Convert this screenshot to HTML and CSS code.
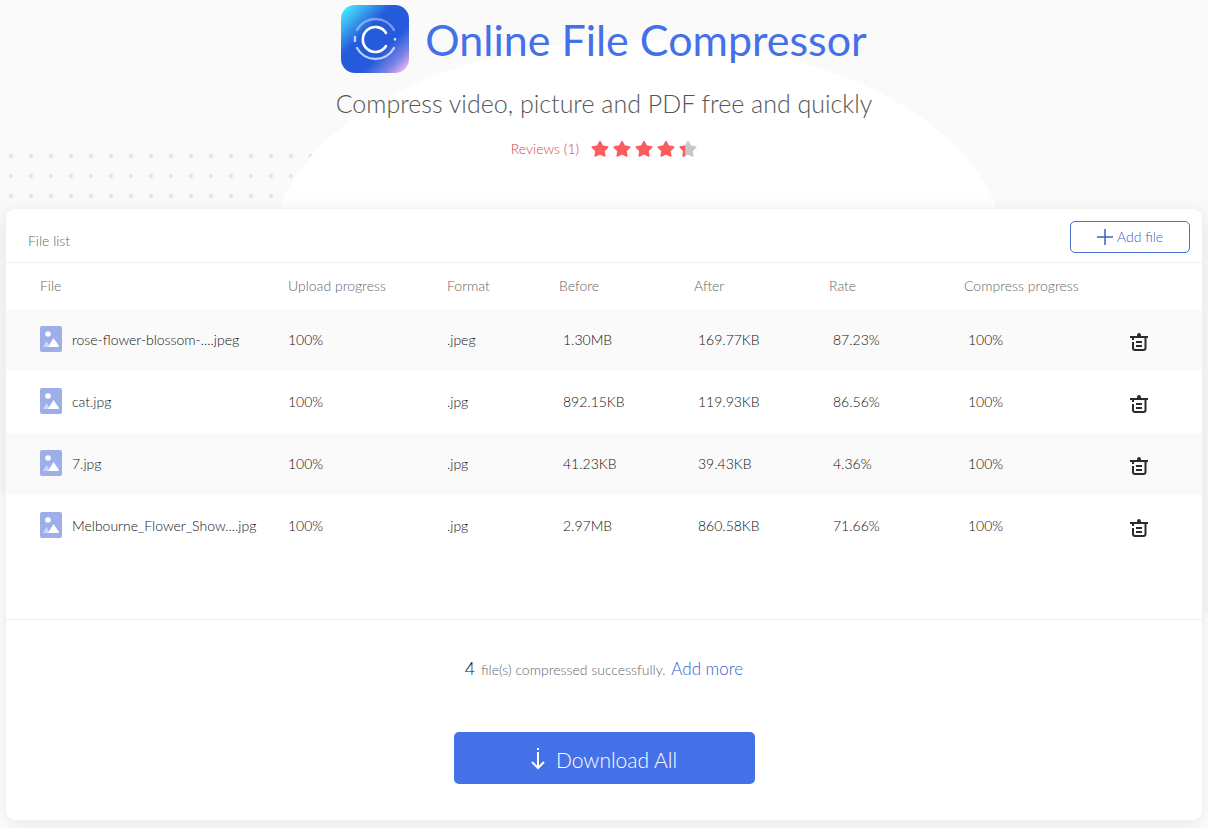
FILE: index.html
```html
<!DOCTYPE html>
<html lang="en">
	<head>
		<meta charset="UTF-8">
		<title>Online File Compressor</title>
		<link rel="stylesheet" href="styles.css">
	</head>

	<body>

		<svg class="sprite" aria-hidden="true">
			<symbol id="icon-image" viewBox="0 0 22 26">
				<rect width="22" height="26" rx="2" fill="#9dafea"/>
				<circle cx="8" cy="8" r="2.800" fill="#fff"/>
				<path d="M3 21 L6.500 15 L10 21 Z" fill="#ced7f5"/>
				<path d="M8 21 L13.500 12 L19 20 Q19 21 18 21 Z" fill="#fff"/>
			</symbol>
			<symbol id="icon-trash" viewBox="0 0 18 18">
				<path d="M0 4H18M15.500 4V15Q15.500 17 13.500 17H5Q3 17 3 15V9" fill="none" stroke="#2b2b2b" stroke-width="2"/>
				<path d="M7 3Q7 0 9 0Q11 0 11 3Z" fill="#2b2b2b"/>
				<path d="M6 9H12M6 13H12M2 6H4" fill="none" stroke="#2b2b2b" stroke-width="2"/>
			</symbol>
			<symbol id="icon-star" viewBox="0 0 16 16">
				<path d="M8 1.500 L10.100 5.500 L14.800 6.300 L11.500 9.600 L12.200 14.200 L8 12.200 L3.800 14.200 L4.500 9.600 L1.200 6.300 L5.900 5.500 Z" stroke="currentColor" stroke-width="1.500" stroke-linejoin="round" fill="currentColor"/>
			</symbol>
		</svg>

		<header class="hero">
			<div class="hero-circle"></div>
			<div class="hero-dots"></div>
			<div class="brand">
				<svg class="logo" viewBox="0 0 68 68" aria-hidden="true">
					<defs>
						<linearGradient id="logo-base" x1="0" y1="0" x2="1" y2="1">
							<stop offset="0" stop-color="#4ff"/>
							<stop offset=".12" stop-color="#41c9f8"/>
							<stop offset=".38" stop-color="#245cdc"/>
							<stop offset=".65" stop-color="#245adb"/>
							<stop offset=".83" stop-color="#7f86e6"/>
							<stop offset=".95" stop-color="#eab6f3"/>
						</linearGradient>
					</defs>
					<rect width="68" height="68" rx="14" fill="url(#logo-base)"/>
					<g fill="none" stroke="#fff" stroke-linecap="round" stroke-width="2.400">
						<path d="M16 25A21 21 0 0 1 53 25" opacity=".4"/>
						<path d="M16 43A21 21 0 0 0 53 43" opacity=".7"/>
						<path d="M14 32V36" opacity=".7"/>
						<path d="M54 34V34.500" opacity=".8"/>
						<path d="M45 28A12.500 12.500 0 1 0 45 41" stroke-width="2.600"/>
					</g>
				</svg>
				<h1>Online File Compressor</h1>
			</div>
			<p class="subtitle">Compress video, picture and PDF free and quickly</p>
			<div class="rating">
				<a class="reviews" href="#">Reviews (1)</a>
				<div class="stars" role="img" aria-label="4.3 out of 5">
					<svg class="star"><use href="#icon-star"/></svg>
					<svg class="star"><use href="#icon-star"/></svg>
					<svg class="star"><use href="#icon-star"/></svg>
					<svg class="star"><use href="#icon-star"/></svg>
					<span class="star-partial">
						<svg class="star"><use href="#icon-star"/></svg>
						<svg class="star star-fill"><use href="#icon-star"/></svg>
					</span>
				</div>
			</div>
		</header>

		<main class="card">
			<div class="card-head">
				<h2>File list</h2>
				<button class="add-file" type="button">
					<svg class="plus" viewBox="0 0 16 16" aria-hidden="true"><path d="M0 8H16M8 0V16" stroke="currentColor" stroke-width="1.500"/></svg>
					Add file
				</button>
			</div>

			<div class="list">
				<table class="files">
					<colgroup>
						<col class="col-file">
						<col class="col-upload">
						<col class="col-format">
						<col class="col-size">
						<col class="col-size">
						<col class="col-size">
						<col class="col-compress">
						<col>
					</colgroup>
					<thead>
						<tr>
							<th>File</th>
							<th>Upload progress</th>
							<th>Format</th>
							<th>Before</th>
							<th>After</th>
							<th>Rate</th>
							<th>Compress progress</th>
							<th></th>
						</tr>
					</thead>
					<tbody>
						<tr>
							<td><span class="name"><svg class="thumb"><use href="#icon-image"/></svg>rose-flower-blossom-....jpeg</span></td>
							<td>100%</td>
							<td>.jpeg</td>
							<td class="num">1.30MB</td>
							<td class="num">169.77KB</td>
							<td class="num">87.23%</td>
							<td class="num">100%</td>
							<td><button class="remove" type="button" aria-label="Delete"><svg class="trash"><use href="#icon-trash"/></svg></button></td>
						</tr>
						<tr>
							<td><span class="name"><svg class="thumb"><use href="#icon-image"/></svg>cat.jpg</span></td>
							<td>100%</td>
							<td>.jpg</td>
							<td class="num">892.15KB</td>
							<td class="num">119.93KB</td>
							<td class="num">86.56%</td>
							<td class="num">100%</td>
							<td><button class="remove" type="button" aria-label="Delete"><svg class="trash"><use href="#icon-trash"/></svg></button></td>
						</tr>
						<tr>
							<td><span class="name"><svg class="thumb"><use href="#icon-image"/></svg>7.jpg</span></td>
							<td>100%</td>
							<td>.jpg</td>
							<td class="num">41.23KB</td>
							<td class="num">39.43KB</td>
							<td class="num">4.36%</td>
							<td class="num">100%</td>
							<td><button class="remove" type="button" aria-label="Delete"><svg class="trash"><use href="#icon-trash"/></svg></button></td>
						</tr>
						<tr>
							<td><span class="name"><svg class="thumb"><use href="#icon-image"/></svg>Melbourne_Flower_Show....jpg</span></td>
							<td>100%</td>
							<td>.jpg</td>
							<td class="num">2.97MB</td>
							<td class="num">860.58KB</td>
							<td class="num">71.66%</td>
							<td class="num">100%</td>
							<td><button class="remove" type="button" aria-label="Delete"><svg class="trash"><use href="#icon-trash"/></svg></button></td>
						</tr>
					</tbody>
				</table>
			</div>

			<div class="card-foot">
				<p class="summary"><b>4</b> <span>file(s) compressed successfully.</span> <a href="#">Add more</a></p>
				<button class="download" type="button">
					<svg class="arrow" viewBox="0 0 14 22" aria-hidden="true">
						<path d="M7 4V20M1 14L7 20L13 14" fill="none" stroke="#fff" stroke-width="2"/>
						<path d="M7 0V2" stroke="#fff" stroke-width="2"/>
					</svg>
					Download All
				</button>
			</div>
		</main>

	</body>

</html>
```
FILE: styles.css
```css
* { box-sizing: border-box; margin: 0; padding: 0 }

body {
	min-height: 100vh;
	padding: 0 5px 7px;
	overflow: hidden;
	position: relative;
	font-family: Lato, "Open Sans", sans-serif;
	font-size: 14px;
	font-weight: 300;
	color: #111;
	background: #fff;
}

/* tinted backdrop, ends on a slant behind the card */
body::before {
	content: "";
	position: absolute;
	inset: 0;
	z-index: -2;
	background: #fafafa;
	clip-path: polygon(0 0, 100% 0, 100% 614px, 0 493px);
}

button { font: inherit; cursor: pointer }
a { color: #3560d8; text-decoration: none }

.sprite {
	position: absolute;
	width: 0;
	height: 0;
}

/* header */
.hero {
	height: 208px;
	padding-top: 5px;
	display: flex;
	flex-direction: column;
	align-items: center;
}

.hero-circle {
	position: absolute;
	top: 40px;
	left: 50%;
	z-index: -1;
	width: 734px;
	height: 426px;
	margin-left: -333px;
	border-radius: 50%;
	background: #fff;
}

.hero-dots {
	position: absolute;
	top: 146px;
	left: 1px;
	z-index: -2;
	width: 320px;
	height: 60px;
	background: radial-gradient(circle, #e2e2e2 1px, transparent 3px) 0 0 / 20px 20px;
}

.brand {
	display: flex;
	align-items: center;
	gap: 16px;
}

.logo {
	width: 68px;
	height: 68px;
}

h1 {
	padding-top: 2px;
	font-size: 43px;
	line-height: 66px;
	font-weight: 400;
	color: #4571e8;
}

.subtitle {
	margin-top: 15px;
	font-size: 25px;
	line-height: 30px;
	color: #555;
}

.rating {
	margin-top: 21px;
	display: flex;
	align-items: center;
	gap: 12px;
	line-height: 20px;
}

.reviews { color: #d94448 }

.stars {
	display: flex;
	gap: 4px;
	color: #fb5d5f;
}

.star {
	display: block;
	width: 18px;
	height: 18px;
}

.star-partial {
	position: relative;
	color: #c8c8c8;
}

.star-fill {
	position: absolute;
	top: 0;
	left: 0;
	color: #fb5d5f;
	clip-path: inset(0 12px 0 0);
}

/* card */
.card {
	border: 1px solid #f2f2f2;
	border-radius: 10px;
	background: #fff;
	box-shadow: 0 5px 20px rgba(0, 0, 0, .1);
}

.card-head {
	height: 54px;
	padding: 0 12px 0 22px;
	display: flex;
	align-items: center;
	justify-content: space-between;
	border-bottom: 1px solid #eee;
}

h2 {
	padding-top: 10px;
	font-size: 14px;
	font-weight: 300;
	color: #666;
}

.add-file {
	width: 120px;
	height: 32px;
	margin-top: 2px;
	display: flex;
	align-items: center;
	justify-content: center;
	gap: 4px;
	border: 1px solid #4a70cc;
	border-radius: 5px;
	background: #fff;
	color: #3a62c4;
}

.plus {
	width: 16px;
	height: 16px;
}

.list {
	min-height: 357px;
	border-bottom: 1px solid #eee;
}

.files {
	width: 100%;
	border-collapse: collapse;
	table-layout: fixed;
}

.col-file { width: 270px }
.col-upload { width: 159px }
.col-format { width: 112px }
.col-size { width: 135px }
.col-compress { width: 160px }

th {
	height: 46px;
	padding: 0 0 2px 12px;
	text-align: left;
	font-weight: 300;
	color: #666;
}

td {
	height: 62px;
	padding: 0 0 2px 12px;
}

th:first-child, td:first-child { padding-left: 34px }

td.num { padding-left: 16px }

tbody tr:nth-child(odd) { background: #fafafa }

.name {
	display: flex;
	align-items: center;
	gap: 10px;
	white-space: nowrap;
}

.thumb {
	width: 22px;
	height: 26px;
}

.remove {
	display: block;
	margin-left: 6px;
	padding-top: 6px;
	border: 0;
	background: none;
}

.trash {
	display: block;
	width: 18px;
	height: 18px;
}

.card-foot {
	height: 200px;
	padding-top: 36px;
	display: flex;
	flex-direction: column;
	align-items: center;
	gap: 50px;
}

.summary {
	line-height: 24px;
	color: #666;
}

.summary b {
	font-size: 18px;
	font-weight: 300;
	color: #111;
}

.summary span { margin: 0 2px }
.summary a { font-size: 17px }

.download {
	width: 301px;
	height: 52px;
	padding-top: 2px;
	display: flex;
	align-items: center;
	justify-content: center;
	gap: 11px;
	border: 0;
	border-radius: 5px;
	background: #4571e8;
	color: #fff;
	font-size: 21px;
}

.arrow {
	width: 14px;
	height: 22px;
}
```
